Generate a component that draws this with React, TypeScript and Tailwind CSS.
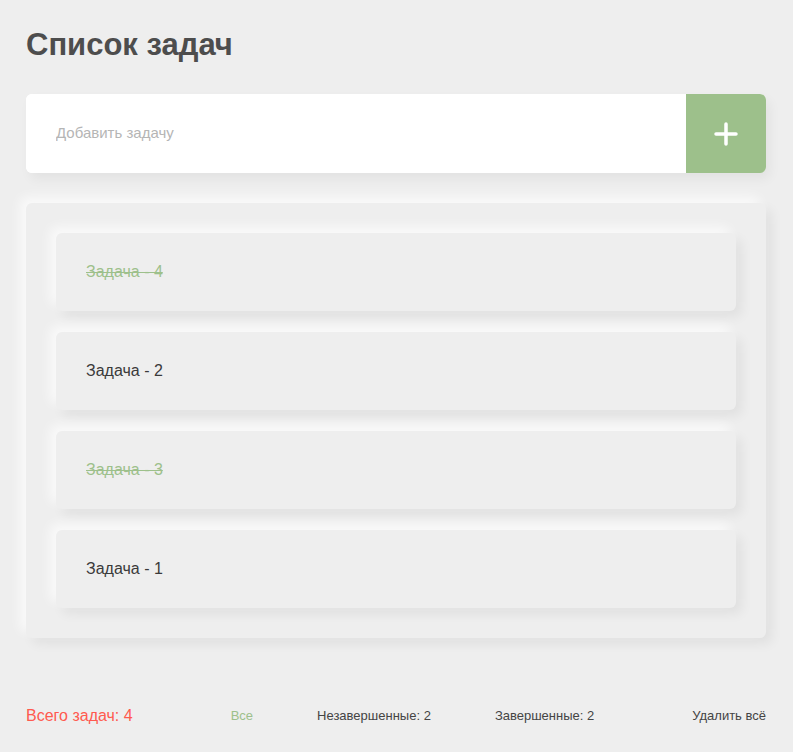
import React, { useState } from 'react';

type Task = { id: number; title: string; done: boolean };

const initialTasks: Task[] = [
  { id: 4, title: 'Задача - 4', done: true },
  { id: 2, title: 'Задача - 2', done: false },
  { id: 3, title: 'Задача - 3', done: true },
  { id: 1, title: 'Задача - 1', done: false },
];

const PlusIcon = () => (
  <svg width="24" height="24" viewBox="0 0 24 24" fill="none">
    <path d="M12 2v20M2 12h20" stroke="white" strokeWidth="3.5" strokeLinecap="round" />
  </svg>
);

export default function App() {
  const [tasks] = useState<Task[]>(initialTasks);
  const done = tasks.filter((t) => t.done).length;

  return (
    <div className="min-h-screen bg-[#eeeeee] pl-[26px] pr-[27px] pt-[26px] font-['Liberation_Sans',sans-serif] text-[#444]">
      <h1 className="text-[31px] font-bold leading-[38px] text-[#4d4d4d]">Список задач</h1>

      <div className="mt-[30px] flex h-[79px] rounded-md bg-white shadow-[4px_6px_12px_rgba(0,0,0,0.05)]">
        <input
          className="flex-1 rounded-l-md bg-white px-[30px] text-[15px] text-[#444] outline-none placeholder:text-[#b5b5b5]"
          placeholder="Добавить задачу"
        />
        <button className="flex w-[80px] items-center justify-center rounded-r-md bg-[#9dc08b]">
          <PlusIcon />
        </button>
      </div>

      <div className="mt-[30px] flex flex-col gap-[21px] rounded-md bg-[#eeeeee] p-[30px] shadow-[-6px_-6px_12px_rgba(255,255,255,0.7),6px_6px_12px_rgba(0,0,0,0.06)]">
        {tasks.map((t) => (
          <div
            key={t.id}
            className="flex h-[78px] items-center rounded-md bg-[#eeeeee] px-[30px] shadow-[-6px_-6px_12px_rgba(255,255,255,0.7),6px_6px_12px_rgba(0,0,0,0.06)]"
          >
            <span
              className={
                t.done
                  ? 'text-[16px] text-[#9dc08b] line-through'
                  : 'text-[16px] text-[#3a3a3a]'
              }
            >
              {t.title}
            </span>
          </div>
        ))}
      </div>

      <div className="mt-[66px] flex items-center justify-between">
        <span className="text-[16px] text-[#ff5a4f]">Всего задач: {tasks.length}</span>
        <div className="flex items-center gap-16 text-[13px]">
          <button className="text-[#9dc08b]">Все</button>
          <button className="text-[#444]">Незавершенные: {tasks.length - done}</button>
          <button className="text-[#444]">Завершенные: {done}</button>
        </div>
        <button className="text-[13px] text-[#444]">Удалить всё</button>
      </div>
    </div>
  );
}
